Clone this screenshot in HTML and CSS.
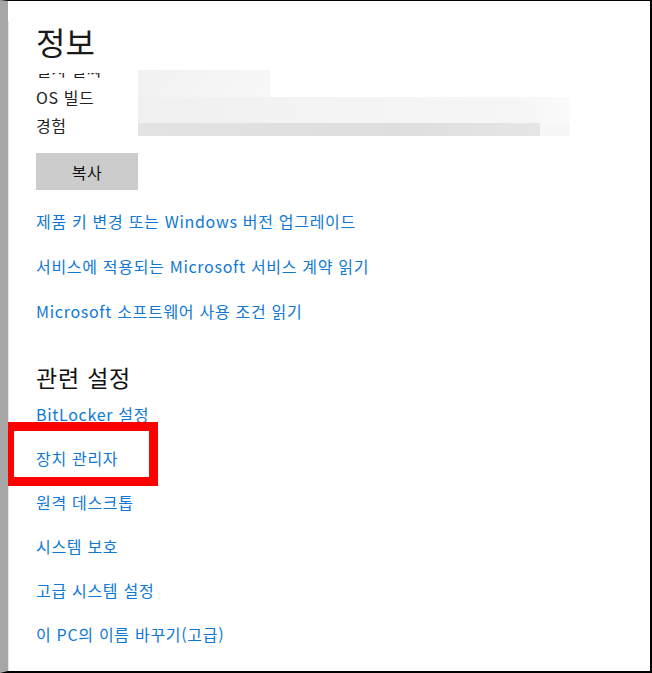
FILE: index.html
```html
<!DOCTYPE html>
<html lang="ko">
<head>
    <meta charset="UTF-8">
    <meta name="viewport" content="width=device-width, initial-scale=1.0">
    <title>정보</title>
    <link rel="stylesheet" href="styles.css">
</head>
<body>
    <div class="frame">
        <div class="page">
            <h1 class="title">정보</h1>

            <div class="specs">
                <div class="spec-labels">
                    <div class="spec-row cut"><span>설치 날짜</span></div>
                    <div class="spec-row">OS 빌드</div>
                    <div class="spec-row">경험</div>
                </div>
                <div class="redacted">
                    <div class="blur blur-a"></div>
                    <div class="blur blur-b"></div>
                    <div class="blur blur-c"></div>
                </div>
            </div>

            <button class="copy-btn" type="button">복사</button>

            <div class="links">
                <a href="#">제품 키 변경 또는 Windows 버전 업그레이드</a>
                <a href="#">서비스에 적용되는 Microsoft 서비스 계약 읽기</a>
                <a href="#">Microsoft 소프트웨어 사용 조건 읽기</a>
            </div>

            <h2 class="section-title">관련 설정</h2>
            <div class="links">
                <a href="#">BitLocker 설정</a>
                <a href="#" class="marked">장치 관리자</a>
                <a href="#">원격 데스크톱</a>
                <a href="#">시스템 보호</a>
                <a href="#">고급 시스템 설정</a>
                <a href="#">이 PC의 이름 바꾸기(고급)</a>
            </div>
        </div>
    </div>
</body>
</html>
```

FILE: styles.css
```css
html, body {
    margin: 0;
    padding: 0;
    background: #fff;
}
body {
    font-family: 'Noto Sans CJK KR', 'Noto Sans', sans-serif;
    color: #1f1f1f;
}
.frame {
    width: 652px;
    height: 673px;
    box-sizing: border-box;
    border-top: 1px solid #000;
    border-right: 2px solid #000;
    border-bottom: 2px solid #000;
    border-left: 8px solid #a6a6a6;
    overflow: hidden;
}
.page {
    height: 100%;
    border-left: 1px solid #e4e4e4;
    padding-left: 27px;
    box-sizing: border-box;
}
.title {
    margin: 20px 0 12px;
    font-size: 32px;
    font-weight: 400;
    line-height: 40px;
    color: #1a1a1a;
}
.specs {
    display: flex;
    align-items: flex-start;
}
.spec-labels {
    width: 102px;
}
.spec-row {
    font-size: 16px;
    letter-spacing: 0.6px;
    line-height: 28px;
    color: #222;
}
.spec-row.cut {
    height: 10px;
    overflow: hidden;
    display: flex;
    align-items: flex-end;
}
.spec-row.cut span {
    display: block;
    line-height: 28px;
    flex-shrink: 0;
}
.redacted {
    margin-top: -3px;
}
.blur-a {
    width: 132px;
    height: 27px;
    background: linear-gradient(135deg, #f1f1f1, #f5f5f5 60%, #f8f8f8);
}
.blur-b {
    width: 432px;
    height: 26px;
    background: linear-gradient(90deg, #f0f0f0, #f4f4f4 50%, #f6f6f6 90%, #fbfbfb);
}
.blur-c {
    width: 432px;
    height: 13px;
    background: linear-gradient(90deg, #e3e3e3, #dedede 60%, #e6e6e6 93%, #f7f7f7 93%);
}
.copy-btn {
    display: block;
    margin-top: 14px;
    width: 102px;
    height: 37px;
    border: none;
    background: #cccccc;
    font-family: inherit;
    font-size: 16px;
    letter-spacing: 0.6px;
    color: #111;
    padding: 0;
}
.links {
    display: flex;
    flex-direction: column;
    align-items: flex-start;
    margin-top: 9px;
}
.links a {
    position: relative;
    font-size: 16px;
    letter-spacing: 0.7px;
    line-height: 45px;
    color: #0f78d4;
    text-decoration: none;
}
.section-title {
    margin: 28px 0 0;
    font-size: 23px;
    letter-spacing: 0.8px;
    font-weight: 400;
    line-height: 30px;
    color: #111;
}
.section-title + .links {
    margin-top: 0;
}
.section-title + .links a {
    line-height: 44px;
}
.marked::after {
    content: "";
    position: absolute;
    left: -31px;
    top: -14px;
    width: 153px;
    height: 64px;
    box-sizing: border-box;
    border: 9px solid #ff0000;
}
```
